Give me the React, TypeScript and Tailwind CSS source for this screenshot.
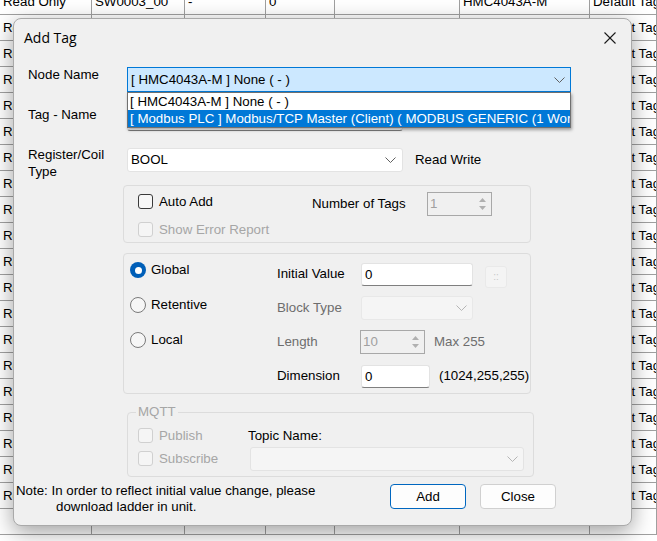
import React from 'react';

const FONT = "font-['Liberation_Sans',Arial,sans-serif]";

function Chevron({ color = '#606060' }: { color?: string }) {
  return (
    <svg width="11" height="6" viewBox="0 0 11 6">
      <polyline points="0.5,0.5 5.5,5.5 10.5,0.5" fill="none" stroke={color} strokeWidth="1" />
    </svg>
  );
}

function Check({ label, disabled = false }: { label: string; disabled?: boolean }) {
  return (
    <div className="flex items-center h-[15px]">
      <span
        className={
          disabled
            ? 'w-[15px] h-[15px] rounded-[3px] border border-[#d0d0d0] bg-[#f5f5f5]'
            : 'w-[15px] h-[15px] rounded-[3px] border border-[#3a3a3a] bg-[#f7f7f7]'
        }
      />
      <span className={disabled ? 'ml-[6px] text-[#a6a6a6] leading-[16px]' : 'ml-[6px] text-black leading-[16px]'}>
        {label}
      </span>
    </div>
  );
}

function Radio({ label, checked = false }: { label: string; checked?: boolean }) {
  return (
    <div className="flex items-center h-[16px]">
      {checked ? (
        <span className="w-[16px] h-[16px] rounded-full bg-[#005fb8] flex items-center justify-center">
          <span className="w-[7px] h-[7px] rounded-full bg-white" />
        </span>
      ) : (
        <span className="w-[16px] h-[16px] rounded-full border border-[#7a7a7a] bg-[#f6f6f6]" />
      )}
      <span className="ml-[5px] text-black leading-[16px]">{label}</span>
    </div>
  );
}

function Spinner({ value, w }: { value: string; w: string }) {
  return (
    <div className={`${w} h-[24px] border border-[#a8a8a8] bg-[#f0f0f0] flex`}>
      <span className="flex-1 pl-[2px] leading-[22px] text-[#a0a0a0]">{value}</span>
      <div className="w-[17px] flex flex-col items-center justify-center gap-[4px]">
        <svg width="7" height="4" viewBox="0 0 7 4">
          <polygon points="0,4 3.5,0 7,4" fill="#b0b0b0" />
        </svg>
        <svg width="7" height="4" viewBox="0 0 7 4">
          <polygon points="0,0 3.5,4 7,0" fill="#b0b0b0" />
        </svg>
      </div>
    </div>
  );
}

function TextBox({ value, w }: { value: string; w: string }) {
  return (
    <div className={`${w} h-[23px] bg-white border border-[#e3e3e3] border-b-[#7f7f7f] rounded-[3px] pl-[3px] leading-[21px] text-black`}>
      {value}
    </div>
  );
}

const rows: string[][] = (() => {
  const r: string[][] = [];
  r.push(['Read Only', 'SW0003_00', '-', '0', '', 'HMC4043A-M', 'Default Tag']);
  for (let i = 0; i < 18; i++) {
    const n = String(4 + i).padStart(4, '0');
    r.push(['Read Write', 'SW' + n, '-', '0', '', 'HMC4043A-M', 'Default Tag']);
  }
  r.push(['Read Write', 'SW0022', '-', '0', '', 'HMC4043A-M', 'Default Tag']);
  r.push(['', '', '', '', '', '', '']);
  return r;
})();

export default function App() {
  return (
    <div className={`${FONT} text-[13.3px] relative w-[657px] h-[541px] overflow-hidden bg-white`}>
      {/* background table */}
      <div className="-mt-[11px] flex flex-col">
        {rows.map((row, i) => (
          <div
            key={i}
            className="grid grid-cols-[92px_93px_81px_69px_125px_130px_1fr] h-[26px] border-b border-[#a0a0a0] bg-white"
          >
            {row.map((c, j) => (
              <div key={j} className="border-r border-[#a0a0a0] pl-[3px] leading-[25px] text-black whitespace-nowrap overflow-hidden">
                {c}
              </div>
            ))}
          </div>
        ))}
      </div>

      {/* dialog */}
      <div className="absolute left-[13px] top-[18px] w-[619px] h-[508px] rounded-[8px] border border-[#a9a9a9] bg-[#f0f0f0] shadow-[0_6px_22px_rgba(0,0,0,0.38)] flex flex-col">
        {/* title bar */}
        <div className="h-[39px] flex items-center pl-[10px] pr-[15px]">
          <span className="-mt-[3px] font-['Segoe_UI','Open_Sans',sans-serif] text-[14px] text-black">Add Tag</span>
          <svg className="ml-auto -mt-[1px]" width="12" height="12" viewBox="0 0 12 12">
            <line x1="0.5" y1="0.5" x2="11.5" y2="11.5" stroke="#1a1a1a" strokeWidth="1.1" />
            <line x1="11.5" y1="0.5" x2="0.5" y2="11.5" stroke="#1a1a1a" strokeWidth="1.1" />
          </svg>
        </div>

        {/* Node Name */}
        <div className="mt-[9px] pl-[14px] flex h-[25px]">
          <span className="w-[99px] leading-[16px] text-black">Node Name</span>
          <div className="relative w-[444px] h-[25px]">
            <div className="w-full h-full bg-[#cce8ff] border border-[#0078d7] flex items-center pl-[3px] pr-[5px]">
              <span className="text-black">[ HMC4043A-M ] None ( - )</span>
              <span className="ml-auto">
                <Chevron />
              </span>
            </div>
            {/* dropdown list */}
            <div className="absolute left-0 top-[25px] w-[444px] z-10 border border-[#707070] bg-white shadow-[1px_2px_3px_rgba(0,0,0,0.35)] flex flex-col">
              <div className="h-[17px] leading-[17px] pl-[2px] text-black whitespace-nowrap overflow-hidden">[ HMC4043A-M ] None ( - )</div>
              <div className="h-[17px] leading-[17px] pl-[2px] bg-[#0078d7] text-white whitespace-nowrap overflow-hidden">
                [ Modbus PLC ] Modbus/TCP Master (Client) ( MODBUS GENERIC (1 Word Register) )
              </div>
            </div>
          </div>
        </div>

        {/* Tag - Name */}
        <div className="mt-[16px] pl-[14px] flex h-[23px]">
          <span className="w-[99px] -mt-px leading-[16px] text-black">Tag - Name</span>
          <TextBox value="" w="w-[276px]" />
        </div>

        {/* Register/Coil Type */}
        <div className="mt-[17px] pl-[14px] flex h-[24px]">
          <span className="w-[99px] -mt-[2px] leading-[17px] text-black">
            Register/Coil
            <br />
            Type
          </span>
          <div className="w-[276px] h-[24px] bg-white border border-[#e3e3e3] rounded-[3px] flex items-center pl-[3px] pr-[6px]">
            <span className="text-black">BOOL</span>
            <span className="ml-auto">
              <Chevron />
            </span>
          </div>
          <span className="ml-[12px] self-center text-black">Read Write</span>
        </div>

        {/* group 1 */}
        <div className="ml-[109px] mt-[13px] w-[408px] h-[58px] border border-[#dcdcdc] rounded-[4px] flex">
          <div className="w-[188px] pl-[14px] pt-[8px] flex flex-col">
            <Check label="Auto Add" />
            <div className="mt-[13px]">
              <Check label="Show Error Report" disabled />
            </div>
          </div>
          <span className="w-[115px] pt-[10px] leading-[16px] text-black">Number of Tags</span>
          <div className="mt-[6px]">
            <Spinner value="1" w="w-[65px]" />
          </div>
        </div>

        {/* group 2 */}
        <div className="ml-[109px] mt-[10px] w-[408px] h-[141px] border border-[#dcdcdc] rounded-[4px] flex">
          <div className="w-[153px] pl-[6px] pt-[8px] flex flex-col gap-[19px]">
            <Radio label="Global" checked />
            <Radio label="Retentive" />
            <Radio label="Local" />
          </div>
          <div className="pt-[3px] flex flex-col">
            <div className="h-[34px] flex items-center">
              <span className="w-[84px] text-black">Initial Value</span>
              <TextBox value="0" w="w-[112px]" />
              <div className="ml-[12px] mt-[5px] w-[22px] h-[22px] rounded-[3px] border border-[#e9e9e9] bg-[#f4f4f4] text-[#c8c8c8] text-[10px] leading-[20px] text-center">
                ::
              </div>
            </div>
            <div className="h-[34px] flex items-center">
              <span className="w-[84px] text-[#6d6d6d]">Block Type</span>
              <div className="w-[112px] h-[24px] bg-[#f5f5f5] border border-[#e8e8e8] rounded-[3px] flex items-center justify-end pr-[5px]">
                <Chevron color="#b5b5b5" />
              </div>
            </div>
            <div className="h-[34px] flex items-center">
              <span className="w-[83px] text-[#6d6d6d]">Length</span>
              <Spinner value="10" w="w-[65px]" />
              <span className="ml-[9px] text-[#6d6d6d]">Max 255</span>
            </div>
            <div className="h-[34px] flex items-center">
              <span className="w-[84px] text-black">Dimension</span>
              <TextBox value="0" w="w-[69px]" />
              <span className="ml-[9px] text-black">(1024,255,255)</span>
            </div>
          </div>
        </div>

        {/* MQTT */}
        <div className="ml-[113px] mt-[18px] w-[407px] h-[65px] border border-[#dcdcdc] rounded-[4px] flex flex-col">
          <div className="h-0 flex">
            <span className="-mt-[9px] ml-[8px] px-[2px] h-[16px] leading-[16px] bg-[#f0f0f0] text-[#a6a6a6]">MQTT</span>
          </div>
          <div className="flex">
            <div className="w-[120px] pl-[10px] pt-[15px] flex flex-col gap-[8px]">
              <Check label="Publish" disabled />
              <Check label="Subscribe" disabled />
            </div>
            <div className="pt-[15px] flex flex-col">
              <span className="leading-[16px] text-black">Topic Name:</span>
              <div className="ml-[2px] mt-[3px] w-[274px] h-[24px] bg-[#f5f5f5] border border-[#e3e3e3] rounded-[3px] flex items-center justify-end pr-[5px]">
                <Chevron color="#b5b5b5" />
              </div>
            </div>
          </div>
        </div>

        {/* footer */}
        <div className="mt-[6px] flex">
          <div className="pl-[2px] flex flex-col leading-[16px] text-black">
            <span>Note: In order to reflect initial value change, please</span>
            <span className="pl-[40px]">download ladder in unit.</span>
          </div>
          <div className="ml-auto mr-[75px] mt-px flex gap-[14px]">
            <div className="w-[76px] h-[25px] rounded-[4px] border-[1.5px] border-[#0067c0] bg-[#fdfdfd] flex items-center justify-center text-black">
              Add
            </div>
            <div className="w-[76px] h-[25px] rounded-[4px] border border-[#d0d0d0] bg-[#fdfdfd] flex items-center justify-center text-black">
              Close
            </div>
          </div>
        </div>
      </div>
    </div>
  );
}
